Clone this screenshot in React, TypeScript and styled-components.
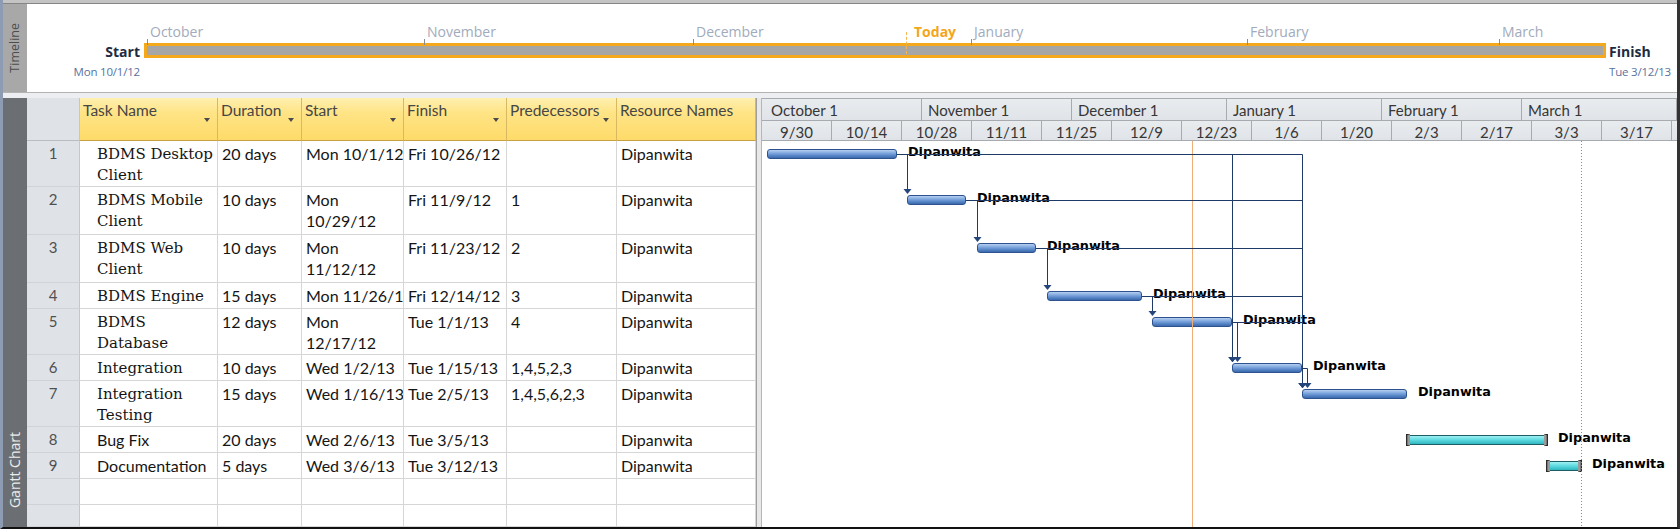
import React from 'react';
import styled, { createGlobalStyle, css } from 'styled-components';

const GlobalStyle = createGlobalStyle`
  *, *::before, *::after { box-sizing: border-box; }
  html, body { margin: 0; padding: 0; background: #fff; }
  body { font-family: Lato, "Liberation Sans", sans-serif; }
`;

type Task = {
  id: number;
  name: string;
  serif: boolean;
  duration: string;
  start: string;
  finish: string;
  pred: number[];
  res: string;
  h: number;
  bar: [number, number];
  manual?: boolean;
};

const tasks: Task[] = [
  { id: 1, name: 'BDMS Desktop\nClient', serif: true, duration: '20 days', start: 'Mon 10/1/12', finish: 'Fri 10/26/12', pred: [], res: 'Dipanwita', h: 46, bar: [5, 135] },
  { id: 2, name: 'BDMS Mobile\nClient', serif: true, duration: '10 days', start: 'Mon\n10/29/12', finish: 'Fri 11/9/12', pred: [1], res: 'Dipanwita', h: 48, bar: [145, 204] },
  { id: 3, name: 'BDMS Web\nClient', serif: true, duration: '10 days', start: 'Mon\n11/12/12', finish: 'Fri 11/23/12', pred: [2], res: 'Dipanwita', h: 48, bar: [215, 274] },
  { id: 4, name: 'BDMS Engine', serif: true, duration: '15 days', start: 'Mon 11/26/12', finish: 'Fri 12/14/12', pred: [3], res: 'Dipanwita', h: 26, bar: [285, 380] },
  { id: 5, name: 'BDMS\nDatabase', serif: true, duration: '12 days', start: 'Mon\n12/17/12', finish: 'Tue 1/1/13', pred: [4], res: 'Dipanwita', h: 46, bar: [390, 470] },
  { id: 6, name: 'Integration', serif: true, duration: '10 days', start: 'Wed 1/2/13', finish: 'Tue 1/15/13', pred: [1, 4, 5, 2, 3], res: 'Dipanwita', h: 26, bar: [470, 540] },
  { id: 7, name: 'Integration\nTesting', serif: true, duration: '15 days', start: 'Wed 1/16/13', finish: 'Tue 2/5/13', pred: [1, 4, 5, 6, 2, 3], res: 'Dipanwita', h: 46, bar: [540, 645] },
  { id: 8, name: 'Bug Fix', serif: false, duration: '20 days', start: 'Wed 2/6/13', finish: 'Tue 3/5/13', pred: [], res: 'Dipanwita', h: 26, bar: [645, 785], manual: true },
  { id: 9, name: 'Documentation', serif: false, duration: '5 days', start: 'Wed 3/6/13', finish: 'Tue 3/12/13', pred: [], res: 'Dipanwita', h: 26, bar: [785, 819], manual: true },
];

const emptyRows = [26, 22];

const months = [
  { label: 'October', x: 3 },
  { label: 'November', x: 280 },
  { label: 'December', x: 549 },
  { label: 'January', x: 827 },
  { label: 'February', x: 1103 },
  { label: 'March', x: 1355 },
];

const topTier = [
  { label: 'October 1', w: 160, first: true },
  { label: 'November 1', w: 150 },
  { label: 'December 1', w: 155 },
  { label: 'January 1', w: 155 },
  { label: 'February 1', w: 140 },
  { label: 'March 1', w: 155 },
];

// last column is only a sliver at the right edge, its label is not visible
const bottomTier = ['9/30', '10/14', '10/28', '11/11', '11/25', '12/9', '12/23', '1/6', '1/20', '2/3', '2/17', '3/3', '3/17', ''];

const COLS = '53px 138px 84px 102px 103px 110px 139px';
const TODAY_X = 430;
const FINISH_X = 819;

const Frame = styled.div`
  width: 1680px;
  height: 529px;
  overflow: hidden;
  display: flex;
  flex-direction: column;
  background: #eceef1;
  border-left: 3px solid #8d9cb3;
  border-right: 3px solid #333;
  border-bottom: 2px solid #111;
`;

const TopStrip = styled.div`
  height: 4px;
  flex-shrink: 0;
  background: #c4c4c4;
  border-bottom: 1px solid #858585;
`;

const TimelinePane = styled.div`
  height: 89px;
  flex-shrink: 0;
  display: flex;
  border-bottom: 1px solid #b3b3b3;
`;

const Gap = styled.div`
  height: 5px;
  flex-shrink: 0;
  background: #eceef1;
`;

const SideTab = styled.div<{ $dark?: boolean }>`
  width: 24px;
  flex-shrink: 0;
  display: flex;
  flex-direction: column;
  align-items: center;
  justify-content: ${(p) => (p.$dark ? 'flex-end' : 'center')};
  padding-bottom: ${(p) => (p.$dark ? '19px' : '0')};
  background: ${(p) => (p.$dark ? '#6b6f74' : '#a8a8a8')};
  color: ${(p) => (p.$dark ? '#ececec' : '#4c4c4c')};
  font-family: "Open Sans", sans-serif;
  font-size: ${(p) => (p.$dark ? '14px' : '12.5px')};
`;

const TabLabel = styled.span`
  writing-mode: vertical-rl;
  transform: rotate(180deg);
  white-space: nowrap;
  line-height: 1;
`;

const TimelineBody = styled.div`
  flex: 1;
  display: flex;
  background: #fff;
  font-family: "Open Sans", sans-serif;
`;

const EndCap = styled.div<{ $finish?: boolean }>`
  white-space: nowrap;
  ${(p) =>
    p.$finish
      ? css`
          flex: 1;
          padding-left: 3px;
          text-align: left;
        `
      : css`
          width: 113px;
          text-align: right;
        `}
`;

const CapTitle = styled.div`
  margin-top: 41px;
  font-size: 14px;
  line-height: 14px;
  font-weight: 700;
  color: #1d2c42;
`;

const CapDate = styled.div`
  margin-top: 7px;
  font-size: 11.5px;
  line-height: 12px;
  letter-spacing: -0.2px;
  color: #5872a0;
`;

const BarZone = styled.div`
  position: relative;
  width: 1462px;
  margin-left: 4px;
  flex-shrink: 0;
`;

const TimeBar = styled.div`
  margin-top: 39px;
  height: 15px;
  border: 3px solid #f4a81c;
  background: #a6a6a6;
`;

const MonthLabel = styled.span<{ $today?: boolean }>`
  position: absolute;
  top: 21px;
  font-size: 14px;
  line-height: 14px;
  white-space: nowrap;
  color: ${(p) => (p.$today ? '#f4a61a' : '#a1abbc')};
  font-weight: ${(p) => (p.$today ? 700 : 400)};
`;

const MonthTick = styled.span<{ $today?: boolean }>`
  position: absolute;
  width: 1px;
  ${(p) =>
    p.$today
      ? css`
          top: 28px;
          height: 22px;
          border-left: 1px dashed #f3b552;
        `
      : css`
          top: 35px;
          height: 6px;
          background: #8c8c8c;
        `}
`;

const GanttPane = styled.div`
  flex: 1;
  display: flex;
  min-height: 0;
`;

const Table = styled.div`
  width: 729px;
  flex-shrink: 0;
  background: #fff;
  display: flex;
  flex-direction: column;
`;

const HeadRow = styled.div`
  display: grid;
  grid-template-columns: ${COLS};
  height: 43px;
  flex-shrink: 0;
`;

const HeadCorner = styled.div`
  background: #dfe3e8;
  border-right: 1px solid #c2c7cd;
  border-bottom: 1px solid #b8bdc4;
`;

const HeadCell = styled.div`
  display: flex;
  align-items: flex-start;
  padding: 2px 0 0 3px;
  background: linear-gradient(to bottom, #fff0b0 0%, #ffe486 35%, #fedb69 100%);
  border-right: 1px solid #d9b862;
  border-bottom: 1px solid #c7a144;
  font-size: 15.5px;
  line-height: 21px;
  color: #464646;
  white-space: nowrap;
  overflow: hidden;
`;

const DropArrow = styled.span`
  flex-shrink: 0;
  width: 0;
  height: 0;
  margin: 18px 7px 0 auto;
  border-left: 3.5px solid transparent;
  border-right: 3.5px solid transparent;
  border-top: 4px solid #4a4a4a;
`;

const TableRow = styled.div<{ $h: number }>`
  display: grid;
  grid-template-columns: ${COLS};
  height: ${(p) => p.$h}px;
  flex-shrink: 0;
`;

const NumCell = styled.div`
  background: #dfe3e8;
  border-right: 1px solid #c2c7cd;
  border-bottom: 1px solid #cfd3d8;
  text-align: center;
  padding-top: 2px;
  font-size: 15px;
  line-height: 21px;
  color: #505050;
`;

const Cell = styled.div<{ $serif?: boolean; $indent?: boolean }>`
  min-width: 0;
  overflow: hidden;
  white-space: pre;
  border-right: 1px solid #d6d6d6;
  border-bottom: 1px solid #d6d6d6;
  padding: ${(p) => (p.$serif ? 3 : 2)}px 0 0 ${(p) => (p.$indent ? 17 : 4)}px;
  font-family: ${(p) => (p.$serif ? '"DejaVu Serif", serif' : 'Lato, sans-serif')};
  font-size: ${(p) => (p.$serif ? 15 : 16)}px;
  line-height: 21px;
  color: #151515;
`;

const Splitter = styled.div`
  width: 6px;
  flex-shrink: 0;
  background: #e8e8e8;
  border-left: 1px solid #9f9f9f;
  border-right: 1px solid #b6b6b6;
`;

const Chart = styled.div`
  flex: 1;
  min-width: 0;
  display: flex;
  flex-direction: column;
  background: #fff;
  overflow: hidden;
`;

const ChartHead = styled.div`
  flex-shrink: 0;
  border-top: 1px solid #a7abb0;
`;

const Tier = styled.div<{ $h: number }>`
  display: flex;
  height: ${(p) => p.$h}px;
  background: linear-gradient(to bottom, #e9ecef, #e0e3e7);
  border-bottom: 1px solid #a7abb0;
`;

const TierCell = styled.div<{ $w: number; $center?: boolean; $pad?: number }>`
  width: ${(p) => p.$w}px;
  flex-shrink: 0;
  border-right: 1px solid #a7abb0;
  padding-left: ${(p) => p.$pad ?? 0}px;
  text-align: ${(p) => (p.$center ? 'center' : 'left')};
  font-size: 15px;
  line-height: 20px;
  padding-top: 1px;
  color: #363636;
  white-space: nowrap;
  overflow: hidden;
`;

const ChartBody = styled.div`
  position: relative;
  flex: 1;
`;

const ChartRow = styled.div<{ $h: number }>`
  position: relative;
  height: ${(p) => p.$h}px;
`;

const Bar = styled.div<{ $manual?: boolean }>`
  position: absolute;
  top: 8px;
  height: 10px;
  ${(p) =>
    p.$manual
      ? css`
          border: 1px solid #1f5d64;
          background: linear-gradient(to bottom, #9ff0f3 0%, #62dce2 45%, #2fb6bf 100%);
          &::before,
          &::after {
            content: '';
            position: absolute;
            top: -2px;
            bottom: -2px;
            width: 4px;
            border: 1px solid #2a2a2a;
            background: #777;
          }
          &::before {
            left: -2px;
            border-right: 2px solid #9a9a9a;
          }
          &::after {
            right: -2px;
            border-left: 2px solid #9a9a9a;
          }
        `
      : css`
          border: 1px solid #2c5290;
          border-radius: 3px;
          background: linear-gradient(to bottom, #b6cff0 0%, #7ea6dd 40%, #5181c4 75%, #3d69ab 100%);
        `}
`;

const BarLabel = styled.span`
  position: absolute;
  top: 4px;
  font-family: "DejaVu Sans", sans-serif;
  font-weight: 700;
  font-size: 12.8px;
  line-height: 14px;
  color: #000;
  white-space: nowrap;
`;

const Overlay = styled.svg`
  position: absolute;
  left: 0;
  top: 0;
  pointer-events: none;
`;

const allHeights = [...tasks.map((t) => t.h), ...emptyRows];
const rowTops = allHeights.reduce<number[]>((acc, h, i) => {
  acc.push(i === 0 ? 0 : acc[i - 1] + allHeights[i - 1]);
  return acc;
}, []);
const bodyHeight = allHeights.reduce((a, b) => a + b, 0);

function Links() {
  const paths: React.ReactNode[] = [];
  tasks.forEach((t, i) => {
    t.pred.forEach((p) => {
      const src = tasks[p - 1];
      const pEnd = src.bar[1];
      const sStart = t.bar[0];
      const x = (sStart > pEnd + 2 ? sStart : pEnd + 5) + 0.5;
      const y0 = rowTops[p - 1] + 13.5;
      const top = rowTops[i] + 8;
      paths.push(
        <g key={`${p}-${t.id}`}>
          <path d={`M${pEnd} ${y0} H${x} V${top - 5}`} fill="none" stroke="#1f3a66" strokeWidth={1} />
          <polygon points={`${x - 4},${top - 6} ${x + 4},${top - 6} ${x},${top - 1}`} fill="#24467a" />
        </g>,
      );
    });
  });
  return <>{paths}</>;
}

export default function App() {
  return (
    <>
      <GlobalStyle />
      <Frame>
        <TopStrip />
        <TimelinePane>
          <SideTab>
            <TabLabel>Timeline</TabLabel>
          </SideTab>
          <TimelineBody>
            <EndCap>
              <CapTitle>Start</CapTitle>
              <CapDate>Mon 10/1/12</CapDate>
            </EndCap>
            <BarZone>
              {months.map((m) => (
                <React.Fragment key={m.label}>
                  <MonthTick style={{ left: m.x }} />
                  <MonthLabel style={{ left: m.x + 3 }}>{m.label}</MonthLabel>
                </React.Fragment>
              ))}
              <MonthTick $today style={{ left: 762 }} />
              <MonthLabel $today style={{ left: 770 }}>Today</MonthLabel>
              <TimeBar />
            </BarZone>
            <EndCap $finish>
              <CapTitle>Finish</CapTitle>
              <CapDate>Tue 3/12/13</CapDate>
            </EndCap>
          </TimelineBody>
        </TimelinePane>
        <Gap />
        <GanttPane>
          <SideTab $dark>
            <TabLabel>Gantt Chart</TabLabel>
          </SideTab>
          <Table>
            <HeadRow>
              <HeadCorner />
              <HeadCell>Task Name<DropArrow /></HeadCell>
              <HeadCell>Duration<DropArrow /></HeadCell>
              <HeadCell>Start<DropArrow /></HeadCell>
              <HeadCell>Finish<DropArrow /></HeadCell>
              <HeadCell>Predecessors<DropArrow /></HeadCell>
              <HeadCell>Resource Names</HeadCell>
            </HeadRow>
            {tasks.map((t) => (
              <TableRow key={t.id} $h={t.h}>
                <NumCell>{t.id}</NumCell>
                <Cell $serif={t.serif} $indent>{t.name}</Cell>
                <Cell>{t.duration}</Cell>
                <Cell>{t.start}</Cell>
                <Cell>{t.finish}</Cell>
                <Cell>{t.pred.join(',')}</Cell>
                <Cell>{t.res}</Cell>
              </TableRow>
            ))}
            {emptyRows.map((h, i) => (
              <TableRow key={`e${i}`} $h={h}>
                <NumCell />
                <Cell />
                <Cell />
                <Cell />
                <Cell />
                <Cell />
                <Cell />
              </TableRow>
            ))}
          </Table>
          <Splitter />
          <Chart>
            <ChartHead>
              <Tier $h={22}>
                {topTier.map((c) => (
                  <TierCell key={c.label} $w={c.w} $pad={c.first ? 9 : 6}>
                    {c.label}
                  </TierCell>
                ))}
              </Tier>
              <Tier $h={20}>
                {bottomTier.map((l, i) => (
                  <TierCell key={`b${i}`} $w={70} $center>
                    {l}
                  </TierCell>
                ))}
              </Tier>
            </ChartHead>
            <ChartBody>
              {tasks.map((t) => (
                <ChartRow key={t.id} $h={t.h}>
                  <Bar $manual={t.manual} style={{ left: t.bar[0], width: t.bar[1] - t.bar[0] }} />
                  <BarLabel style={{ left: t.bar[1] + 11 }}>{t.res}</BarLabel>
                </ChartRow>
              ))}
              {emptyRows.map((h, i) => (
                <ChartRow key={`ce${i}`} $h={h} />
              ))}
              <Overlay width={915} height={bodyHeight}>
                <line x1={TODAY_X + 0.5} y1={0} x2={TODAY_X + 0.5} y2={bodyHeight} stroke="#f0ad75" strokeWidth={1} />
                <line x1={FINISH_X + 0.5} y1={0} x2={FINISH_X + 0.5} y2={bodyHeight} stroke="#8a8a8a" strokeWidth={1} strokeDasharray="1 2" />
                <Links />
              </Overlay>
            </ChartBody>
          </Chart>
        </GanttPane>
      </Frame>
    </>
  );
}
